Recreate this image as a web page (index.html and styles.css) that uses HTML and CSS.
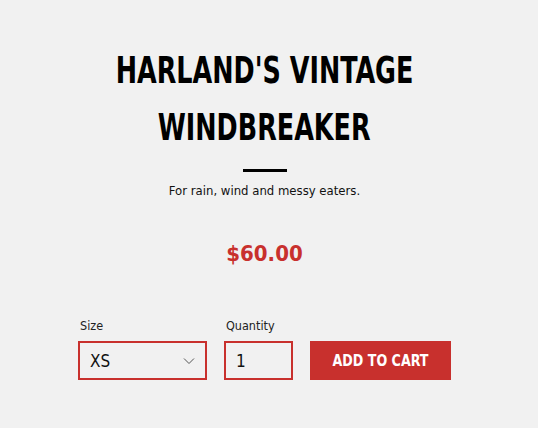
FILE: index.html
```html
<!DOCTYPE html>
<html>
<head>
<meta charset="utf-8">
<link rel="stylesheet" href="styles.css">
</head>
<body>
<main class="product">
  <h1 class="title"><span class="title-line">HARLAND'S VINTAGE</span><span class="title-line">WINDBREAKER</span></h1>
  <div class="divider"></div>
  <p class="tagline">For rain, wind and messy eaters.</p>
  <p class="price">$60.00</p>
  <form class="buy">
    <label class="field">
      <span class="label">Size</span>
      <span class="select">
        <span class="select-value">XS</span>
        <svg class="chev" width="12" height="8" viewBox="0 0 12 8"><path d="M1 1.5 L6 6.5 L11 1.5" fill="none" stroke="#555" stroke-width="1"/></svg>
      </span>
    </label>
    <label class="field">
      <span class="label">Quantity</span>
      <span class="qty">1</span>
    </label>
    <button type="button" class="add"><span class="add-text">ADD TO CART</span></button>
  </form>
</main>
</body>
</html>
```

FILE: styles.css
```css
html, body { margin: 0; padding: 0; }
body {
  background: #f1f1f1;
  font-family: "DejaVu Sans Condensed", sans-serif;
  color: #111;
  width: 538px;
  height: 428px;
  overflow: hidden;
}
.product {
  width: 373px;
  margin-left: 78px;
  padding-top: 42px;
  display: flex;
  flex-direction: column;
  align-items: center;
}
.title {
  margin: 0;
  font-weight: bold;
  font-size: 37px;
  line-height: 57px;
  color: #000;
  text-align: center;
  display: flex;
  flex-direction: column;
  align-items: center;
}
.title-line {
  display: block;
  white-space: nowrap;
  transform: scaleX(0.765);
}
.divider {
  width: 44px;
  height: 3px;
  background: #000;
  margin-top: 13px;
}
.tagline {
  margin: 10px 0 0;
  font-size: 13px;
  line-height: 18px;
}
.price {
  margin: 39px 0 0;
  font-size: 22px;
  font-weight: bold;
  color: #c8302d;
  line-height: 30px;
}
.buy {
  align-self: stretch;
  margin-top: 49px;
  display: flex;
  align-items: flex-end;
  gap: 17px;
}
.field { display: flex; flex-direction: column; }
.label { font-size: 12.5px; line-height: 16px; margin-bottom: 7px; margin-left: 2px; color: #222; }
.select, .qty {
  box-sizing: border-box;
  height: 39px;
  border: 2px solid #c8302d;
  display: flex;
  align-items: center;
  font-size: 17px;
}
.select { width: 129px; padding: 0 10px 0 10px; justify-content: space-between; }
.qty { width: 69px; padding-left: 10px; }
.add {
  box-sizing: border-box;
  height: 39px;
  width: 141px;
  border: none;
  background: #c8302d;
  color: #fff;
  font-family: "DejaVu Sans Condensed", sans-serif;
  font-weight: bold;
  font-size: 16px;
  padding: 0;
}
.add-text { display: inline-block; transform: scaleX(0.88); white-space: nowrap; }
```
